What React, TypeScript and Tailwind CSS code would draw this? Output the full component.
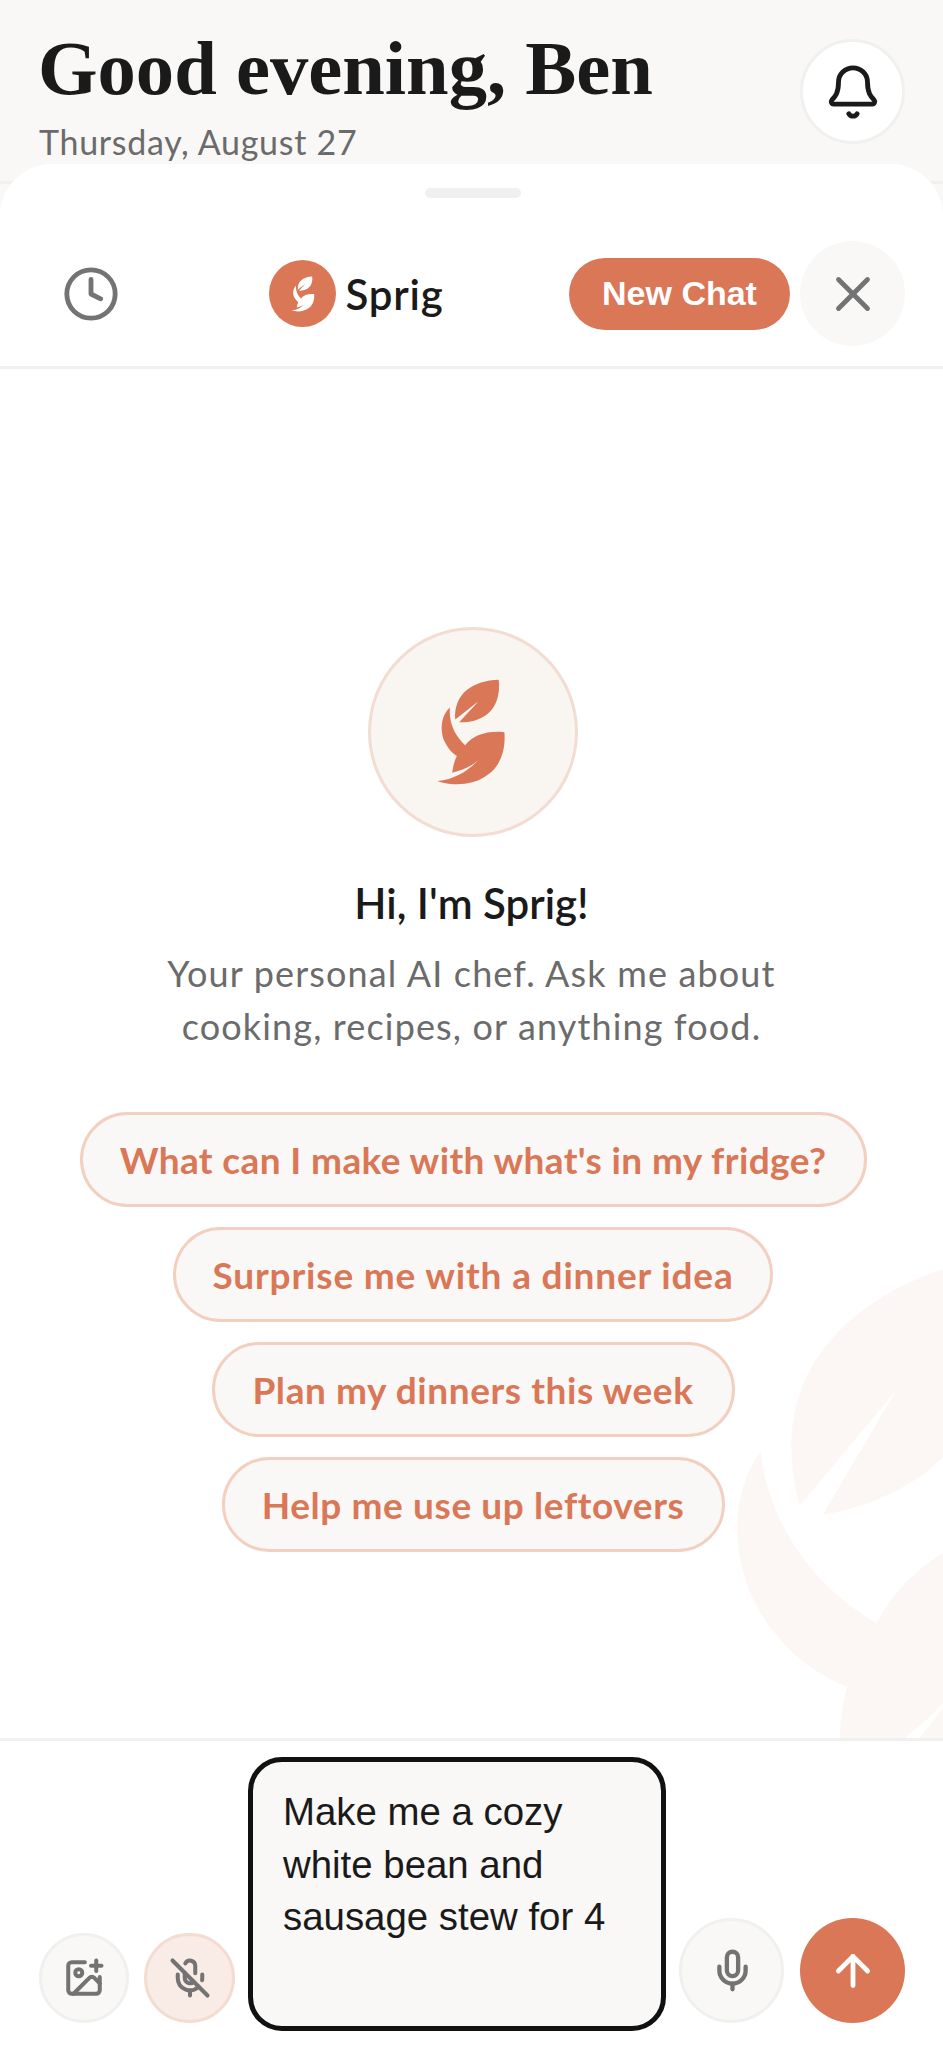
import React from 'react';
import { ArrowUp, Bell, Clock, ImagePlus, Mic, MicOff, X } from 'lucide-react';

const suggestions = [
  { text: "What can I make with what's in my fridge?", className: 'w-[787px] tracking-[0.38px]' },
  { text: 'Surprise me with a dinner idea', className: 'w-[600px] tracking-[0.83px]' },
  { text: 'Plan my dinners this week', className: 'w-[523px] tracking-[0.57px]' },
  { text: 'Help me use up leftovers', className: 'w-[503px] tracking-[0.6px]' },
];

const LeafPaths = () => (
  <>
    <path d="M476 210C400 212 340 250 345 330L415 275L357 338C430 340 485 300 476 210Z" />
    <path d="M329 294C300 320 298 370 315 400C325 420 338 432 350 440C342 455 338 472 336 490C375 480 410 465 430 432C400 475 350 510 292 515C320 527 395 535 445 495C485 465 497 415 493 368C445 362 400 375 375 407C345 380 325 340 329 294Z" />
  </>
);

const SprigLogo = ({ className }: { className: string }) => (
  <svg viewBox="285 205 215 325" className={className} fill="currentColor">
    <LeafPaths />
  </svg>
);

export default function App() {
  return (
    <div className="flex h-[2047px] w-full flex-col overflow-hidden bg-[#f9f8f6] font-['Lato',sans-serif] text-[#1a1a1a]">
      {/* Page header behind the sheet */}
      <header className="flex h-[184px] shrink-0 items-start justify-between border-b-[3px] border-[#f0f0ee] pl-[38px] pr-[38px]">
        <div>
          <h1 className="mt-[27px] font-['Liberation_Serif',serif] text-[76.6px] font-bold leading-[84px]">Good evening, Ben</h1>
          <p className="ml-px mt-[6px] text-[34px] leading-[50px] tracking-[0.7px] text-[#6b6b6b]">Thursday, August 27</p>
        </div>
        <button className="mt-[39px] flex h-[105px] w-[105px] items-center justify-center rounded-full border-[3px] border-[#f0f0ee] bg-white">
          <Bell size={58} strokeWidth={2} />
        </button>
      </header>

      {/* Chat sheet */}
      <section className="relative z-10 mt-[-20px] flex min-h-0 flex-1 flex-col rounded-t-[52px] bg-white">
        <div className="ml-[425px] mt-[24px] h-[10px] w-[96px] shrink-0 rounded-[5px] bg-[#f0f0ee]" />
        <div className="mt-[43px] box-content flex h-[105px] shrink-0 items-center border-b-[3px] border-[#f0f0ee] pb-[20px] pl-[39px] pr-[38px]">
          <button className="flex h-[105px] w-[105px] items-center justify-center pr-[1px] text-[#737373]">
            <Clock size={58} strokeWidth={2} />
          </button>
          <div className="flex flex-1 items-center justify-center gap-[9px]">
            <div className="flex h-[67px] w-[67px] items-center justify-center rounded-full bg-[#d97757] text-white">
              <SprigLogo className="h-[36px] w-[24px]" />
            </div>
            <span className="text-[42px] font-semibold leading-none tracking-[0.8px]">Sprig</span>
          </div>
          <button className="h-[72px] w-[221px] rounded-full bg-[#d97757] font-['Liberation_Sans',sans-serif] text-[34px] font-bold text-white">
            New Chat
          </button>
          <button className="ml-[10px] flex h-[105px] w-[105px] items-center justify-center rounded-full bg-[#f9f8f6] text-[#737373]">
            <X size={58} strokeWidth={2} />
          </button>
        </div>

        {/* Empty state */}
        <div className="relative flex min-h-0 flex-1 flex-col items-center overflow-hidden pl-[3px] pt-[258px]">
          <svg className="absolute bottom-0 right-0 h-[500px] w-[260px] text-[#fcf7f4]" viewBox="0 0 260 500" fill="currentColor">
            <g transform="translate(-573.5 -159) rotate(-12) scale(1.7)">
              <LeafPaths />
            </g>
          </svg>
          <div className="relative flex h-[210px] w-[210px] items-center justify-center rounded-full border-[3px] border-[#f3ddd2] bg-[#f9f6f2] text-[#d97757]">
            <SprigLogo className="mr-[5px] h-[108px] w-[72px]" />
          </div>
          <h2 className="relative mr-[3px] mt-[39px] text-[42px] font-semibold leading-[55px]">Hi, I'm Sprig!</h2>
          <p className="relative mr-[3px] mt-[16px] w-[660px] text-center text-[36px] leading-[52.5px] tracking-[1.15px] text-[#6b6b6b]">
            Your personal AI chef. Ask me about cooking, recipes, or anything food.
          </p>
          <div className="relative mt-[60px] flex flex-col items-center gap-[20px]">
            {suggestions.map((item) => (
              <button
                key={item.text}
                className={`h-[95px] rounded-full border-[3px] border-[#f3cfc0] bg-[#f9f8f6] text-[37px] font-bold text-[#d97757] ${item.className}`}
              >
                {item.text}
              </button>
            ))}
          </div>
        </div>

        {/* Composer */}
        <div className="flex h-[309px] shrink-0 items-end gap-[13px] border-t-[3px] border-[#f0f0ee] pb-[24px] pl-[39px] pr-[38px]">
          <button className="flex h-[90px] w-[90px] shrink-0 items-center justify-center rounded-full border-[3px] border-[#f0f0ee] bg-[#f9f8f6] text-[#737373]">
            <ImagePlus size={42} strokeWidth={2.3} />
          </button>
          <button className="ml-[2px] flex h-[90px] w-[91px] shrink-0 items-center justify-center rounded-full border-[3px] border-[#f3ddd2] bg-[#f9ebe6] text-[#737373]">
            <MicOff size={42} strokeWidth={2.3} />
          </button>
          <textarea
            readOnly
            value="Make me a cozy white bean and sausage stew for 4"
            className="mb-[-8px] h-[274px] min-w-0 flex-1 resize-none rounded-[34px] border-[5px] border-[#111] bg-[#f9f8f6] px-[30px] pb-[25px] pt-[24px] font-['Liberation_Sans',sans-serif] text-[38.4px] leading-[52.5px] outline-none"
          />
          <button className="flex h-[105px] w-[105px] shrink-0 items-center justify-center rounded-full border-[3px] border-[#f0f0ee] bg-[#f9f8f6] pl-[2px] text-[#737373]">
            <Mic size={45} strokeWidth={2.3} />
          </button>
          <button className="ml-[3px] flex h-[105px] w-[105px] shrink-0 items-center justify-center rounded-full bg-[#d97757] text-white">
            <ArrowUp size={50} strokeWidth={2.3} />
          </button>
        </div>
      </section>
    </div>
  );
}
